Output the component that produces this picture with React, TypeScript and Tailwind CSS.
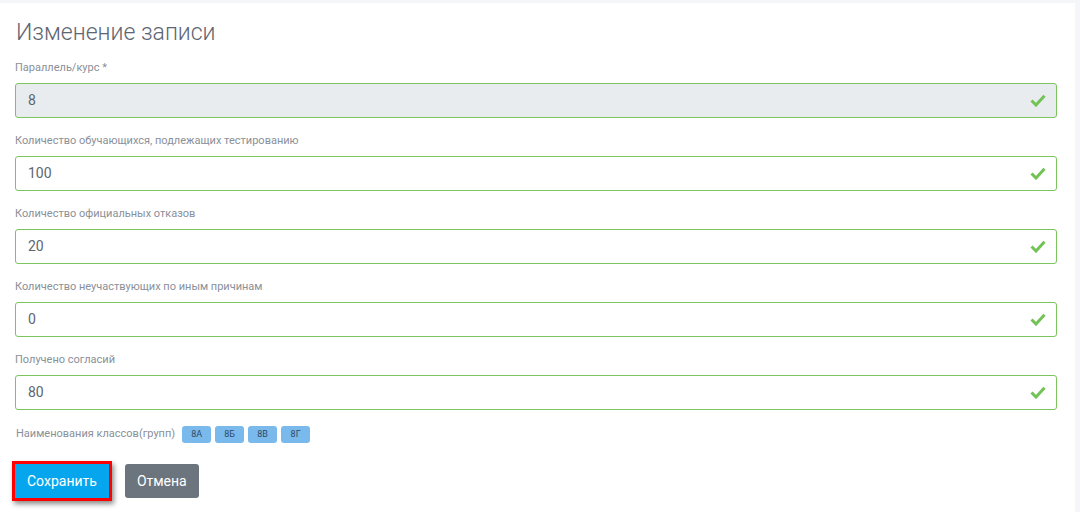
const fields = [
  { label: "Параллель/курс *", value: "8", disabled: true },
  { label: "Количество обучающихся, подлежащих тестированию", value: "100" },
  { label: "Количество официальных отказов", value: "20" },
  { label: "Количество неучаствующих по иным причинам", value: "0" },
  { label: "Получено согласий", value: "80" },
];

const groups = ["8А", "8Б", "8В", "8Г"];

function Check() {
  return (
    <svg width="16" height="13" viewBox="0 0 16 13" className="shrink-0">
      <path d="M1.5 6.5 L6 11 L14.5 1.8" fill="none" stroke="#72c256" strokeWidth="3" />
    </svg>
  );
}

function Field({ label, value, disabled }: { label: string; value: string; disabled?: boolean }) {
  return (
    <div>
      <div className="text-[11px] leading-[14px] text-[#8a9099] mb-[8px]">{label}</div>
      <div
        className={
          "h-[35px] border border-[#7cc45e] rounded-[3px] flex items-center justify-between pl-[12px] pr-[10px] text-[14px] text-[#60666e] " +
          (disabled ? "bg-[#e9ecef]" : "bg-white")
        }
      >
        <span>{value}</span>
        <Check />
      </div>
    </div>
  );
}

export default function App() {
  return (
    <div className="w-[1080px] h-[512px] bg-[#f5f6f9] pt-[3px] overflow-hidden" style={{ fontFamily: "Roboto, 'Liberation Sans', sans-serif" }}>
      <div className="w-[1075px] h-full bg-white pl-[15px] pr-[18px] pt-[16px]">
        <h1 className="text-[23px] leading-[28px] font-light text-[#5d6572] pl-[1px]">Изменение записи</h1>
        <div className="mt-[14px] flex flex-col gap-[16px]">
          {fields.map((f) => (
            <Field key={f.label} {...f} />
          ))}
        </div>
        <div className="mt-[16px] flex items-center gap-[4px] pl-[1px]">
          <span className="text-[11px] text-[#8a9099] mr-[3px]">Наименования классов(групп)</span>
          {groups.map((g) => (
            <span key={g} className="w-[29px] h-[17px] rounded-[3px] bg-[#7ab9ec] text-[9px] text-[#2e4a66] flex items-center justify-center">
              {g}
            </span>
          ))}
        </div>
        <div className="mt-[18px] flex items-center gap-[13px]">
          <div className="-ml-[3px] border-[3px] border-[#ff0000] shadow-[2px_3px_5px_rgba(0,0,0,0.45)]">
            <button className="h-[34px] px-[12px] bg-[#06a6ef] text-white text-[14px]">Сохранить</button>
          </div>
          <button className="h-[34px] px-[12px] bg-[#6c757d] text-white text-[14px] rounded-[3px]">Отмена</button>
        </div>
      </div>
    </div>
  );
}
